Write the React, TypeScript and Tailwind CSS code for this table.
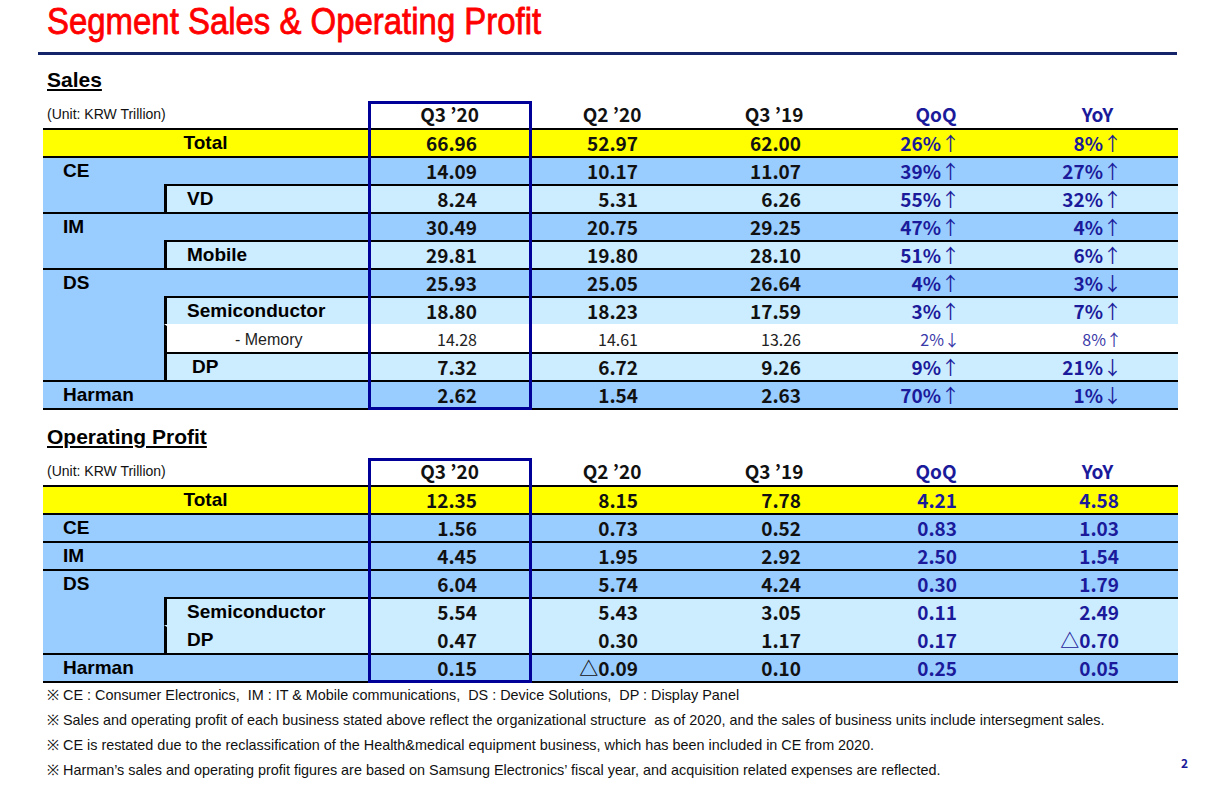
import React from 'react';

type Kind = 'total' | 'main' | 'sub' | 'memory';

type RowData = {
  label: string;
  kind: Kind;
  v: string[];
  line?: boolean;
  pad?: string;
};

const NUM = "font-['Noto_Sans_CJK_KR','Noto_Sans',sans-serif]";
const NAVY = 'text-[#1a1a9a]';

const sales: RowData[] = [
  { label: 'Total', kind: 'total', v: ['66.96', '52.97', '62.00', '26%↑', '8%↑'] },
  { label: 'CE', kind: 'main', v: ['14.09', '10.17', '11.07', '39%↑', '27%↑'] },
  { label: 'VD', kind: 'sub', line: true, v: ['8.24', '5.31', '6.26', '55%↑', '32%↑'] },
  { label: 'IM', kind: 'main', v: ['30.49', '20.75', '29.25', '47%↑', '4%↑'] },
  { label: 'Mobile', kind: 'sub', line: true, v: ['29.81', '19.80', '28.10', '51%↑', '6%↑'] },
  { label: 'DS', kind: 'main', v: ['25.93', '25.05', '26.64', '4%↑', '3%↓'] },
  { label: 'Semiconductor', kind: 'sub', line: true, v: ['18.80', '18.23', '17.59', '3%↑', '7%↑'] },
  { label: '- Memory', kind: 'memory', line: false, pad: 'pl-[68px]', v: ['14.28', '14.61', '13.26', '2%↓', '8%↑'] },
  { label: 'DP', kind: 'sub', line: true, pad: 'pl-[25px]', v: ['7.32', '6.72', '9.26', '9%↑', '21%↓'] },
  { label: 'Harman', kind: 'main', v: ['2.62', '1.54', '2.63', '70%↑', '1%↓'] },
];

const profit: RowData[] = [
  { label: 'Total', kind: 'total', v: ['12.35', '8.15', '7.78', '4.21', '4.58'] },
  { label: 'CE', kind: 'main', v: ['1.56', '0.73', '0.52', '0.83', '1.03'] },
  { label: 'IM', kind: 'main', v: ['4.45', '1.95', '2.92', '2.50', '1.54'] },
  { label: 'DS', kind: 'main', v: ['6.04', '5.74', '4.24', '0.30', '1.79'] },
  { label: 'Semiconductor', kind: 'sub', line: true, v: ['5.54', '5.43', '3.05', '0.11', '2.49'] },
  { label: 'DP', kind: 'sub', line: false, v: ['0.47', '0.30', '1.17', '0.17', '△0.70'] },
  { label: 'Harman', kind: 'main', v: ['0.15', '△0.09', '0.10', '0.25', '0.05'] },
];

// column widths + right padding for the five value columns
const cols = [
  { w: 'w-[163px]', pr: 'pr-[54px]' },
  { w: 'w-[162px]', pr: 'pr-[55px]' },
  { w: 'w-[162px]', pr: 'pr-[54px]' },
  { w: 'w-[162px]', pr: 'pr-[60px]' },
  { w: 'w-[161px]', pr: 'pr-[59px]' },
];

const heads = ['Q3 ’20', 'Q2 ’20', 'Q3 ’19', 'QoQ', 'YoY'];

function bgFor(kind: Kind) {
  if (kind === 'total') return 'bg-[#ffff00]';
  if (kind === 'main') return 'bg-[#99ccff]';
  if (kind === 'memory') return 'bg-white';
  return 'bg-[#ccecff]';
}

// split "26%↑" into number and a thin arrow
function Value({ val }: { val: string }) {
  const last = val.slice(-1);
  if (last === '↑' || last === '↓') {
    return (
      <>
        {val.slice(0, -1)}
        <span className="-mr-[3px] font-normal">{last}</span>
      </>
    );
  }
  return <>{val}</>;
}

function Row({ r }: { r: RowData }) {
  const bg = bgFor(r.kind);
  const top = r.line === false ? 'border-t-2 border-transparent' : 'border-t-2 border-black';
  const isSub = r.kind === 'sub' || r.kind === 'memory';
  const light = r.kind === 'memory';

  return (
    <div className="flex h-[28px]">
      {isSub ? (
        <>
          <div className="w-[121px] bg-[#99ccff]" />
          <div
            className={`w-[204px] ${bg} ${top} border-l-[3px] border-l-black flex items-center pt-px ${r.pad ?? 'pl-[20px]'} ${
              light ? 'text-[16px] text-[#222]' : 'text-[19px] font-bold text-black'
            }`}
          >
            {r.label}
          </div>
        </>
      ) : (
        <div
          className={`w-[325px] ${bg} ${top} flex items-center pt-px text-[19px] font-bold text-black ${
            r.kind === 'total' ? 'justify-center' : 'pl-[20px]'
          }`}
        >
          {r.label}
        </div>
      )}
      {r.v.map((val, i) => (
        <div
          key={i}
          className={`${cols[i].w} ${cols[i].pr} ${bg} ${top} flex items-center justify-end ${NUM} ${
            light ? 'text-[16px] font-normal' : 'text-[19px] font-bold'
          } ${i >= 3 ? (light ? 'text-[#3a3aa8]' : NAVY) : light ? 'text-[#222]' : 'text-[#111]'}`}
        >
          <Value val={val} />
        </div>
      ))}
    </div>
  );
}

function Table({ rows }: { rows: RowData[] }) {
  return (
    <div className="relative ml-[43px] w-[1135px]">
      <div className="flex h-[27px] items-center">
        <div className="w-[325px] pl-[4px] text-[14px] text-[#111]">(Unit: KRW Trillion)</div>
        {heads.map((h, i) => (
          <div
            key={h}
            className={`${cols[i].w} text-center text-[19px] font-bold ${NUM} ${i >= 3 ? NAVY : 'text-[#111]'}`}
          >
            {h}
          </div>
        ))}
      </div>
      {rows.map((r) => (
        <Row key={r.label} r={r} />
      ))}
      <div className="h-[2px] bg-black" />
      <div className="pointer-events-none absolute left-[325px] top-0 bottom-0 w-[164px] border-[3px] border-[#000099]" />
    </div>
  );
}

const notes = [
  '※ CE : Consumer Electronics,  IM : IT & Mobile communications,  DS : Device Solutions,  DP : Display Panel',
  '※ Sales and operating profit of each business stated above reflect the organizational structure  as of 2020, and the sales of business units include intersegment sales.',
  '※ CE is restated due to the reclassification of the Health&medical equipment business, which has been included in CE from 2020.',
  '※ Harman’s sales and operating profit figures are based on Samsung Electronics’ fiscal year, and acquisition related expenses are reflected.',
];

export default function App() {
  return (
    <div className="w-[1216px] h-[806px] overflow-hidden bg-white font-['Liberation_Sans',Arial,sans-serif]">
      <div className="pl-[47px] pt-[3px]">
        <h1 className="origin-left scale-x-[0.89] whitespace-nowrap text-[37px] leading-none text-[#ff0000] [-webkit-text-stroke:0.8px_#ff0000]">
          Segment Sales &amp; Operating Profit
        </h1>
      </div>
      <div className="ml-[38px] mt-[12px] h-[3px] w-[1139px] bg-[#14246b]" />

      <div className="ml-[47px] mt-[14px] text-[21px] font-bold leading-none text-black underline decoration-2 underline-offset-2">
        Sales
      </div>
      <div className="mt-[11px]">
        <Table rows={sales} />
      </div>

      <div className="ml-[47px] mt-[16px] text-[21px] font-bold leading-none text-black underline decoration-2 underline-offset-2">
        Operating Profit
      </div>
      <div className="mt-[11px]">
        <Table rows={profit} />
      </div>

      <div className="ml-[47px] flex w-[1141px] justify-between">
        <div className="text-[14.4px] leading-[25px] text-[#111]">
          {notes.map((n) => (
            <div key={n} className="whitespace-pre">
              {n}
            </div>
          ))}
        </div>
        <div className={`self-end mb-[14px] text-[12px] font-bold leading-none ${NUM} ${NAVY}`}>2</div>
      </div>
    </div>
  );
}
